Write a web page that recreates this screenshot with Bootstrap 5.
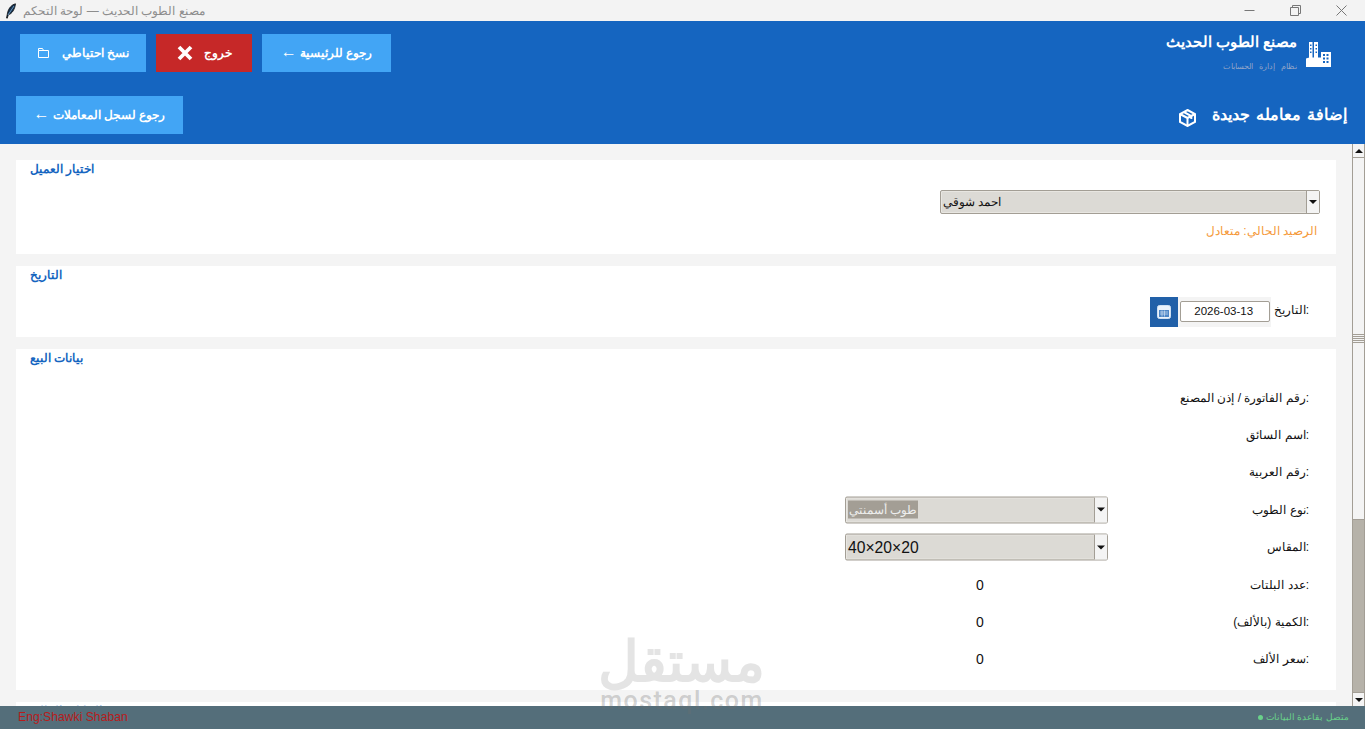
<!DOCTYPE html>
<html lang="ar">
<head>
<meta charset="utf-8">
<title>مصنع الطوب الحديث</title>
<link rel="stylesheet" href="https://cdn.jsdelivr.net/npm/bootstrap@5.3.0/dist/css/bootstrap.min.css">
<style>
html,body{height:729px;overflow:hidden}
body{font-family:"Liberation Sans",Arial,sans-serif;background:#f4f4f4;color:#111;font-size:12px}
.app{width:1365px;height:729px}
.titlebar{height:21px;background:#f3f3f3;color:#8d8d8d;font-size:12px;padding:0 1px 0 5px}
.titlebar .ttl{margin-left:6px}
.winbtn{width:46px;height:21px;display:flex;align-items:center;justify-content:center}
.hdr{background:#1565c0;height:123px;color:#fff}
.hdr-top{height:75px;padding:13px 33px 0 20px}
.hdr-sub{padding:0 18px 0 16px;height:38px}
.tb-left{gap:10px}
.tkbtn{height:38px;background:#42a5f5;color:#fff;font-weight:700;font-size:12px;border:0;border-radius:0;display:flex;align-items:center;justify-content:center;gap:8px;padding:0}
.tkbtn:hover{background:#42a5f5;color:#fff}
.b-home{width:129px}
.b-exit{width:96px;background:#c62828;gap:11px}
.b-exit:hover{background:#c62828}
.b-back{width:126px}
.b-log{width:167px}
.arw{font-size:16px;line-height:12px;font-weight:400}
.brand-name{font-size:14.700px;font-weight:700;line-height:18px;margin-top:-1px}
.brand-sub{font-size:8px;word-spacing:4px;color:#90a4c8;line-height:12px;margin-top:10px}
.brand-ic{margin:8px 0 0 9px}
.pg-title{font-size:16px;word-spacing:1.500px;font-weight:700;color:#fff;line-height:20px}
.cube-ic{margin:6px 16px 0 0}
.main{height:562px;overflow:hidden;position:relative}
.content{width:1352px;height:562px;padding:16px 16px 0;overflow:hidden}
.sect{background:#fff;margin-bottom:12px;padding:0 14px}
.sect-h{color:#1565c0;font-size:12px;font-weight:700;line-height:18px}
.s1{height:94px}.s2{height:71px}.s3{height:341px}.s4{height:30px}
.combo{height:24px;background:#dcdad5;border:1px solid #a39e95;border-radius:2px;display:flex;align-items:stretch;box-shadow:inset 0 0 0 1px #e8e6e1}
.combo-text{flex:1;display:flex;align-items:center;padding:0 2px}
.combo-arrow{width:13px;background:#f4f4f4;border-left:1px solid #a39e95;display:flex;align-items:center;justify-content:center}
.combo-arrow i{display:block;width:0;height:0;border-left:4px solid transparent;border-right:4px solid transparent;border-top:4px solid #111}
.c-client{width:380px;margin-left:910px;margin-top:12px}
.bal{color:#f59a3a;font-size:12px;direction:rtl;text-align:right;padding-right:5px;margin-top:10px;line-height:14px}
.date-row{margin-top:13px;height:30px;padding-right:13px}
.date-lbl{font-size:12px;margin-left:3px}
.date-box{width:90px;height:21px;border:1px solid #a39e95;background:#fff;border-radius:2px;font-size:11.500px;display:flex;align-items:center;justify-content:center;padding-right:2px}
.date-wrap{background:#f4f4f4;padding:4px 1px 5px 2px;height:30px}
.cal{width:28px;height:30px;background:#2160a8;display:flex;align-items:center;justify-content:center}
.frows{margin-top:12px}
.frow{height:37.400px;position:relative}
.flbl{font-size:12px;position:absolute;right:13px;top:50%;transform:translateY(-50%);white-space:nowrap}
.fval{position:absolute;left:946px;top:50%;transform:translateY(-50%);font-size:14px;color:#111}
.c-f{position:absolute;left:815px;top:50%;transform:translateY(-50%);width:263px;height:27px}
.sel-txt{background:#a39e95;color:#eee;line-height:18px;padding:0 1px;font-size:12px}
.c-f .combo-text{font-size:15.700px}
.sbar{position:absolute;top:0;right:0;width:13px;height:562px;background:#f4f4f4;border-left:1px solid #a39e95;border-right:1px solid #a39e95;display:flex;flex-direction:column}
.sarr{height:14px;display:flex;align-items:center;justify-content:center;background:#f4f4f4;border-bottom:1px solid #a39e95}
.sarr i{display:block;width:0;height:0;border-left:4px solid transparent;border-right:4px solid transparent;border-bottom:4px solid #111}
.sarr.dn{border-bottom:0;border-top:1px solid #a39e95}
.sarr.dn i{border-bottom:0;border-top:4px solid #111}
.strk{flex:1}
.sthumb1{height:362px;border-bottom:1px solid #a39e95;display:flex;align-items:center;justify-content:center}
.grip{width:11px;height:9px;background:repeating-linear-gradient(#a39e95 0 1px,transparent 1px 2px)}
.sfill{background:#b6b2a9;height:172px}
.wm{position:absolute;left:599px;top:630px;width:166px;pointer-events:none;text-align:center;z-index:5}
.wm-ar{font-family:"Noto Sans","Liberation Sans",sans-serif;font-size:56px;font-weight:700;line-height:58px;direction:rtl;white-space:nowrap;color:#e4e4e4}
.wm-en{font-family:"Roboto","Liberation Sans",sans-serif;font-size:25px;font-weight:500;letter-spacing:1.500px;line-height:26px;color:rgba(110,110,110,.3);white-space:nowrap}
.status{height:23px;background:#546e7a;padding:0 16px 0 18px;position:relative;z-index:4}
.st-l{color:#b71c1c;font-size:12.200px}
.st-r{color:#69d28a;font-size:9px;direction:rtl}
.dot{display:inline-block;width:5px;height:5px;border-radius:50%;background:#69d28a;margin-right:3px}
</style>
</head>
<body>
<div class="app d-flex flex-column">
  <div class="titlebar d-flex align-items-center justify-content-between">
    <div class="d-flex align-items-center">
      <svg width="12" height="16" viewBox="0 0 12 16"><path d="M10.500.8C7 1.500 3.500 5 2.500 10l-1 5 .8.200 1-3.400C7 11 10 6 10.500.8z" fill="#16324f" stroke="#000" stroke-width=".7"/><path d="M9 3 3 12" stroke="#7fb0d8" stroke-width=".8"/></svg>
      <span class="ttl" dir="rtl">مصنع الطوب الحديث — لوحة التحكم</span>
    </div>
    <div class="d-flex">
      <div class="winbtn"><svg width="11" height="11" viewBox="0 0 11 11"><path d="M.5 5.500h10" stroke="#777" fill="none"/></svg></div>
      <div class="winbtn"><svg width="11" height="11" viewBox="0 0 11 11"><path d="M.5 2.500h8v8h-8zM2.500 2.500V.5h8v8H8.500" stroke="#777" fill="none"/></svg></div>
      <div class="winbtn"><svg width="11" height="11" viewBox="0 0 11 11"><path d="M.5.5l10 10M10.500.5l-10 10" stroke="#777" fill="none"/></svg></div>
    </div>
  </div>

  <div class="hdr d-flex flex-column">
    <div class="hdr-top d-flex justify-content-between align-items-start">
      <div class="d-flex tb-left">
        <button class="btn tkbtn b-back" type="button"><svg width="13" height="12" viewBox="0 0 13 12"><path d="M1.500 3.500h10v7h-10zM1.500 3.500v-2h4l1 2" fill="none" stroke="#fff"/></svg><span dir="rtl" class="ms-1">نسخ احتياطي</span></button>
        <button class="btn tkbtn b-exit" type="button"><svg width="16" height="16" viewBox="0 0 16 16"><path d="M2 2l12 12M14 2 2 14" stroke="#fff" stroke-width="3.800"/></svg><span dir="rtl">خروج</span></button>
        <button class="btn tkbtn b-home" type="button"><span dir="rtl">رجوع للرئيسية <span class="arw">←</span></span></button>
      </div>
      <div class="d-flex">
        <div class="text-end" dir="rtl">
          <div class="brand-name">مصنع الطوب الحديث</div>
          <div class="brand-sub">نظام إدارة الحسابات</div>
        </div>
        <svg class="brand-ic" width="26" height="26" viewBox="0 0 26 26" fill="#fff"><path d="M3 0h3.500v16H3zM8 0h4v16H8zM15 10h10v15H15zM0 16.500l3-1h12l3 1V25H0z"/><path d="M4 2.500h1.500v1.500H4zM4 6h1.500v1.500H4zM4 9.500h1.500V11H4zM9.500 2.500H11V4H9.500zM9.500 6H11v1.500H9.500zM9.500 9.500H11V11H9.500zM17 12h2v2h-2zM20.500 12h2v2h-2zM17 15.500h2v2h-2zM20.500 15.500h2v2h-2zM17 19h2v2h-2zM20.500 19h2v2h-2z" fill="#1565c0"/></svg>
      </div>
    </div>
    <div class="hdr-sub d-flex justify-content-between align-items-center">
      <button class="btn tkbtn b-log" type="button"><span dir="rtl">رجوع لسجل المعاملات <span class="arw">←</span></span></button>
      <div class="d-flex align-items-center">
        <svg class="cube-ic" width="17" height="18" viewBox="0 0 17 18" fill="none" stroke="#fff" stroke-width="2"><path d="M8.500 1 16 5v8l-7.500 4L1 13V5z"/><path d="M1 5l7.500 4L16 5M8.500 9v8M4.800 3l7.500 4v3"/></svg>
        <div class="pg-title" dir="rtl">إضافة معامله جديدة</div>
      </div>
    </div>
  </div>

  <div class="main">
    <div class="content">
      <section class="sect s1">
        <div class="sect-h"><span dir="rtl">اختيار العميل</span></div>
        <div class="combo c-client"><div class="combo-text"><span dir="rtl">احمد شوقي</span></div><div class="combo-arrow"><i></i></div></div>
        <div class="bal">الرصيد الحالي: متعادل</div>
      </section>
      <section class="sect s2">
        <div class="sect-h"><span dir="rtl">التاريخ</span></div>
        <div class="date-row d-flex justify-content-end align-items-start">
          <div class="cal"><svg width="14" height="14" viewBox="0 0 14 14"><rect x=".5" y=".5" width="13" height="13" rx="2" fill="#eaf2fb" stroke="#cfe0f2"/><rect x="2" y="5" width="10" height="7" fill="#4d86c6"/><path d="M3 7h8M3 9h8M5 5.500v6M7.500 5.500v6" stroke="#cfe0f2" stroke-width=".7"/></svg></div>
          <div class="date-wrap"><div class="date-box">2026-03-13</div></div>
          <div class="date-lbl lh-base mt-1"><span dir="rtl">التاريخ</span>:</div>
        </div>
      </section>
      <section class="sect s3">
        <div class="sect-h"><span dir="rtl">بيانات البيع</span></div>
        <div class="frows">
          <div class="frow"><span class="flbl"><span dir="rtl">رقم الفاتورة / إذن المصنع</span>:</span></div>
          <div class="frow"><span class="flbl"><span dir="rtl">اسم السائق</span>:</span></div>
          <div class="frow"><span class="flbl"><span dir="rtl">رقم العربية</span>:</span></div>
          <div class="frow"><div class="combo c-f"><div class="combo-text"><span class="sel-txt" dir="rtl">طوب أسمنتي</span></div><div class="combo-arrow"><i></i></div></div><span class="flbl"><span dir="rtl">نوع الطوب</span>:</span></div>
          <div class="frow"><div class="combo c-f"><div class="combo-text"><span dir="ltr">40×20×20</span></div><div class="combo-arrow"><i></i></div></div><span class="flbl"><span dir="rtl">المقاس</span>:</span></div>
          <div class="frow"><span class="fval">0</span><span class="flbl"><span dir="rtl">عدد البلتات</span>:</span></div>
          <div class="frow"><span class="fval">0</span><span class="flbl"><span dir="rtl">الكمية (بالألف)</span>:</span></div>
          <div class="frow"><span class="fval">0</span><span class="flbl"><span dir="rtl">سعر الألف</span>:</span></div>
        </div>
      </section>
      <section class="sect s4">
        <div class="sect-h"><span dir="rtl">البيانات المالية</span></div>
      </section>
    </div>
    <div class="sbar">
      <div class="sarr"><i></i></div>
      <div class="strk">
        <div class="sthumb1"><div class="grip"></div></div>
        <div class="sfill"></div>
      </div>
      <div class="sarr dn"><i></i></div>
    </div>
  </div>

  <div class="status d-flex justify-content-between align-items-center">
    <span class="st-l">Eng:Shawki Shaban</span>
    <span class="st-r">متصل بقاعدة البيانات<span class="dot"></span></span>
  </div>
</div>
<div class="wm" aria-hidden="true">
  <div class="wm-ar">مستقل</div>
  <div class="wm-en">mostaql.com</div>
</div>
<script src="https://cdn.jsdelivr.net/npm/bootstrap@5.3.0/dist/js/bootstrap.bundle.min.js"></script>
</body>
</html>
